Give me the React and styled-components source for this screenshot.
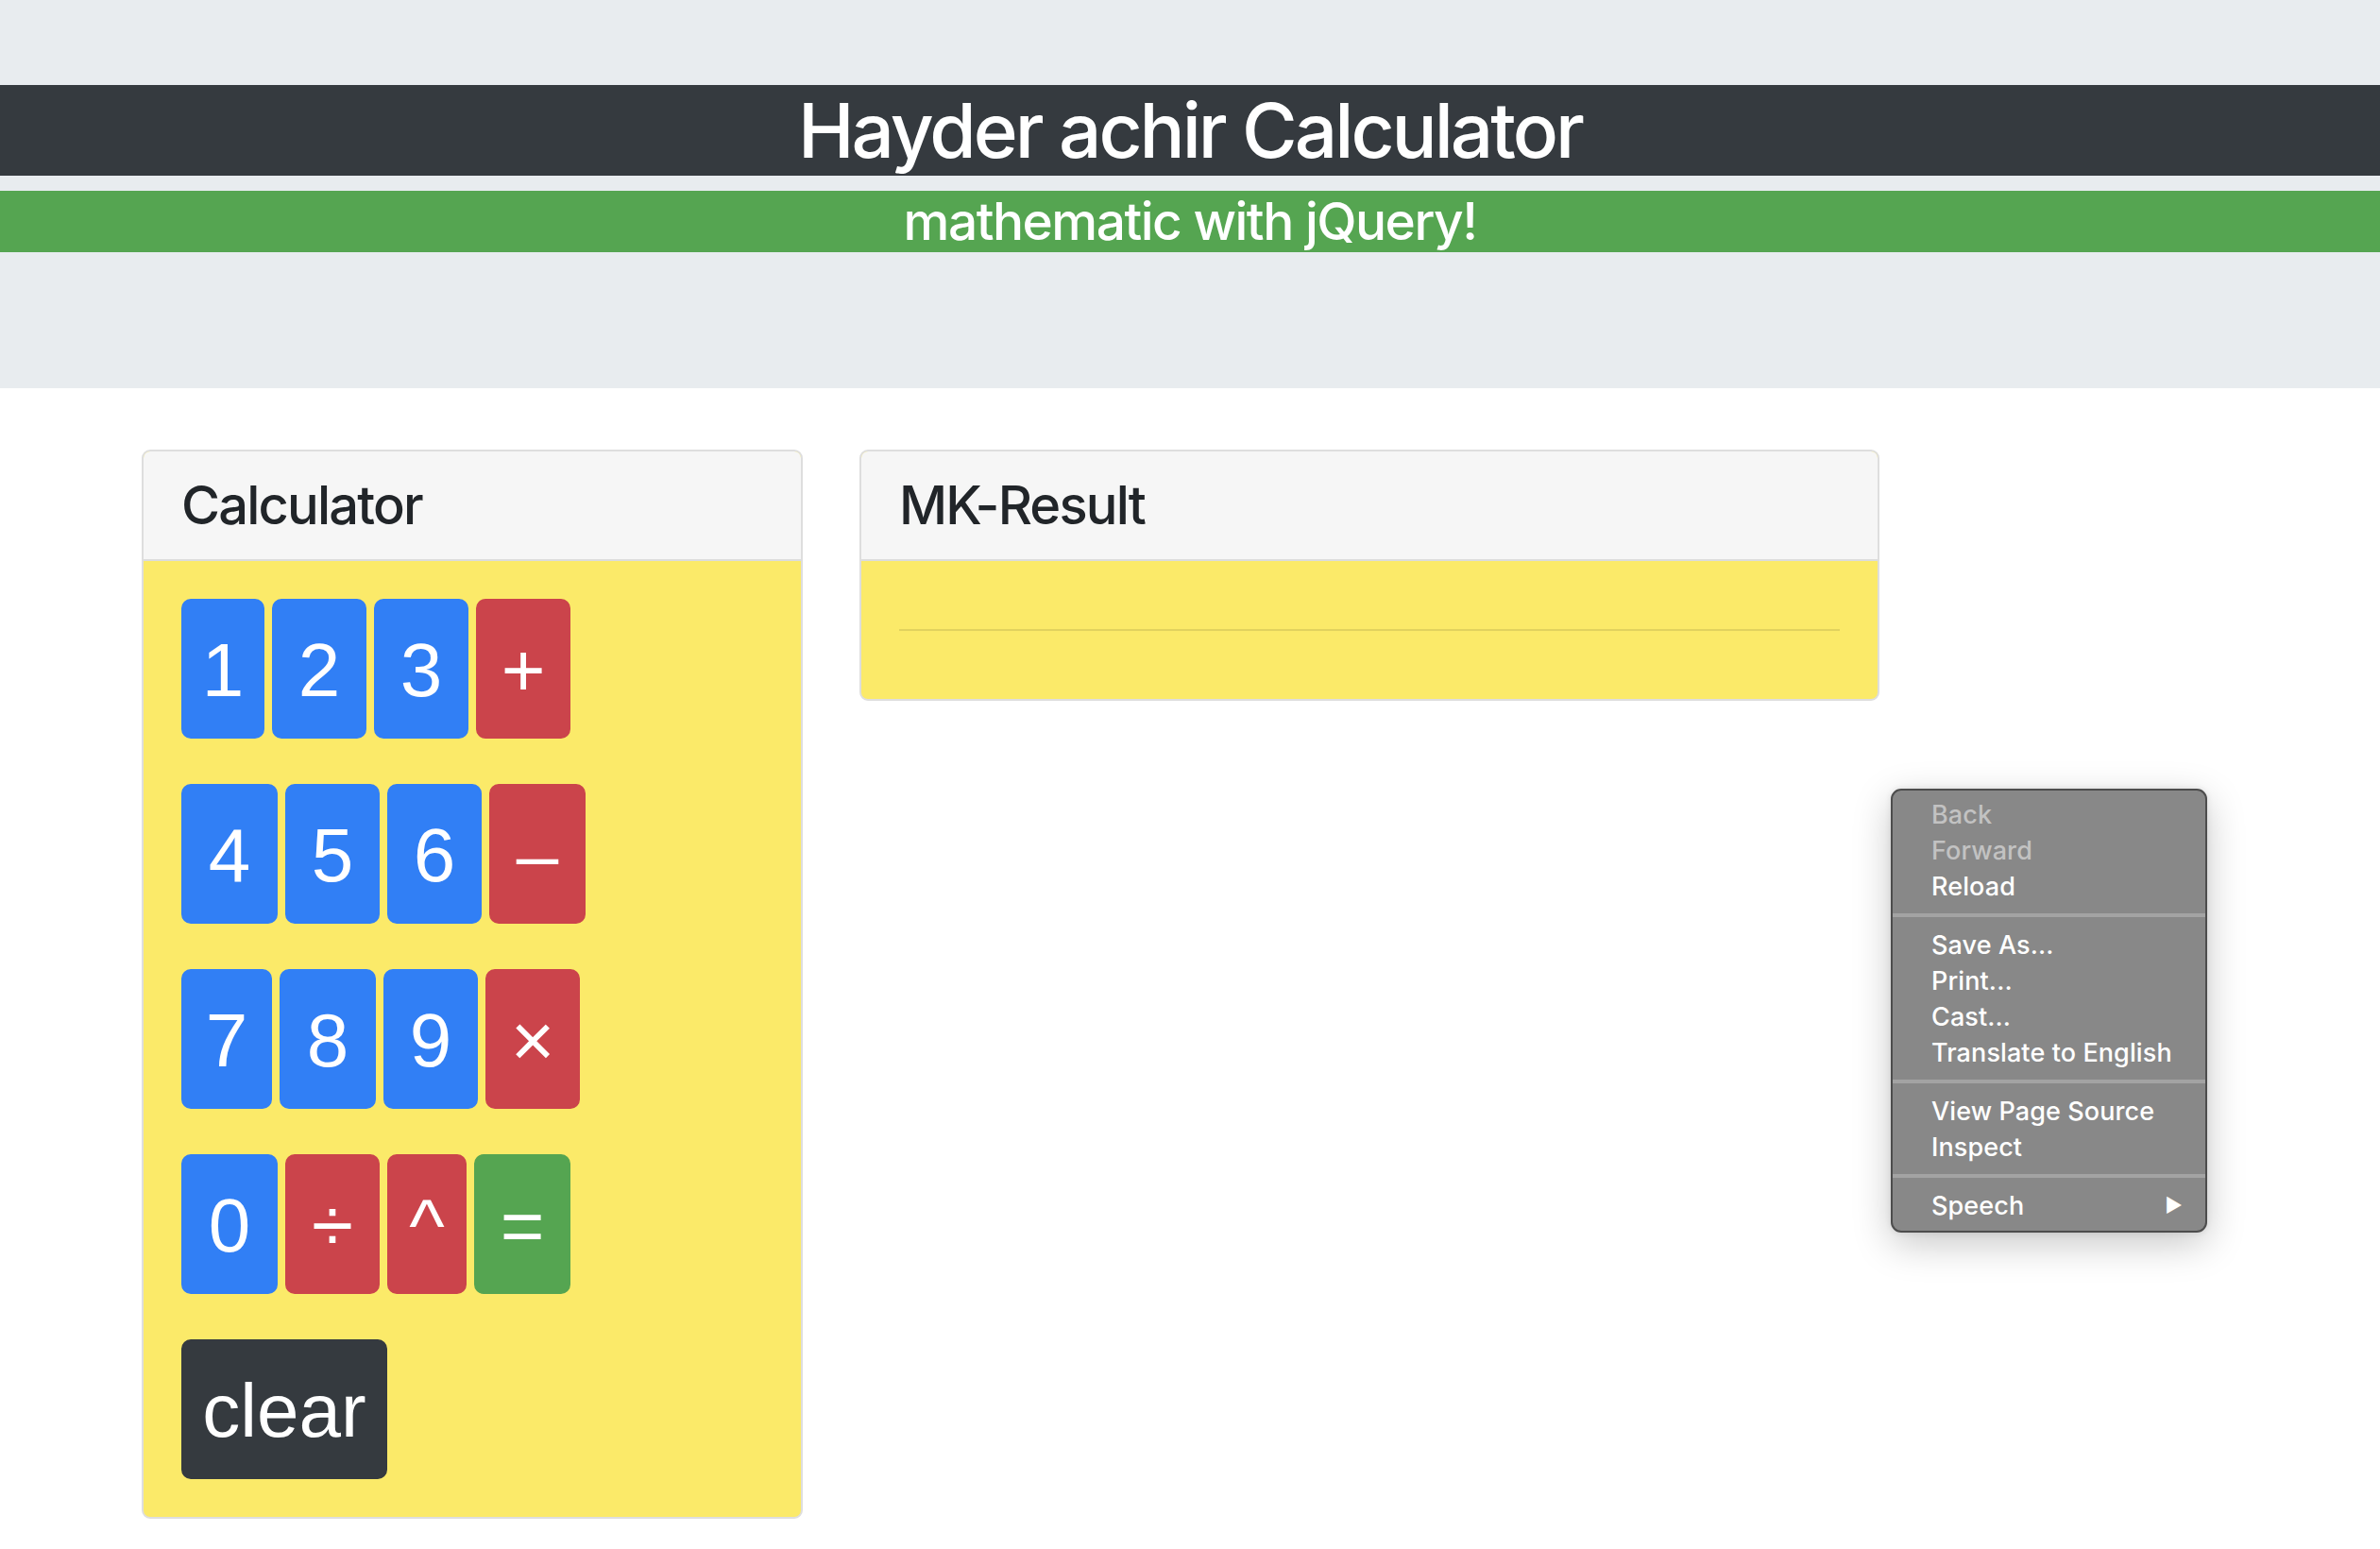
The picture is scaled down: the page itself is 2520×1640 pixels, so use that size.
import React from "react";
import styled, { createGlobalStyle } from "styled-components";

const GlobalStyle = createGlobalStyle`
  body {
    margin: 0;
    background: #fff;
    font-family: Inter, "Helvetica Neue", Arial, sans-serif;
  }
  * { box-sizing: border-box; }
`;

const Page = styled.div`
  position: relative;
  min-height: 1640px;
`;

/* top banner */
const Jumbotron = styled.header`
  background: #e8ecef;
  padding: 90px 0 128px;
  margin-bottom: 65px;
`;

const Title = styled.h1`
  margin: 0 0 16px;
  background: #353a3f;
  color: #fff;
  font-size: 80px;
  line-height: 96px;
  font-weight: 500;
  text-align: center;
  letter-spacing: -3px;
`;

const Subtitle = styled.h3`
  margin: 0 0 16px;
  background: #55a551;
  color: #fff;
  font-size: 55px;
  line-height: 65px;
  font-weight: 500;
  text-align: center;
  letter-spacing: -1.5px;
`;

/* grid */
const Container = styled.main`
  width: 2280px;
  margin: 0 auto;
`;

const Row = styled.div`
  display: flex;
  align-items: flex-start;
`;

const Col = styled.div`
  flex: 0 0 ${(p) => (p.span / 12) * 100}%;
  padding: 0 30px;
`;

/* cards */
const Card = styled.section`
  border: 2px solid #dedede;
  border-radius: 9px;
  overflow: hidden;
  background: #fbea69;
`;

const CardHeader = styled.div`
  background: #f6f6f6;
  padding: 24px 40px;
  border-bottom: 2px solid #dcdcdc;
`;

const CardTitle = styled.h3`
  margin: 0;
  font-size: 56px;
  line-height: 66px;
  font-weight: 500;
  color: #212529;
  letter-spacing: -1.8px;
`;

const CardBody = styled.div`
  padding: 40px;
`;

const Rule = styled.hr`
  margin: 32px 0;
  border: 0;
  border-top: 2px solid rgba(0, 0, 0, 0.1);
`;

/* keypad */
const KeyPad = styled.div`
  display: flex;
  flex-direction: column;
  gap: 48px;
`;

const KeyRow = styled.div`
  display: flex;
  gap: 8px;
`;

const toneColors = {
  num: "#317ff5",
  op: "#cb444b",
  eq: "#55a551",
  dark: "#353a3f",
};

const Key = styled.button`
  width: ${(p) => p.w}px;
  height: 148px;
  padding: 14px 0 10px;
  border: 2px solid ${(p) => toneColors[p.tone]};
  border-radius: 10px;
  background: ${(p) => toneColors[p.tone]};
  color: #fff;
  font-family: "Liberation Sans", Arial, sans-serif;
  font-size: 80px;
  line-height: 120px;
  text-align: center;
  cursor: pointer;
`;

/* right-click menu overlay */
const ContextMenu = styled.div`
  position: absolute;
  left: 2002px;
  top: 835px;
  width: 335px;
  padding: 6px 0 8px;
  background: #888888;
  border: 2px solid #4d4d4d;
  border-radius: 11px;
  box-shadow: 0 12px 40px rgba(0, 0, 0, 0.22), 0 0 6px rgba(0, 0, 0, 0.1);
  font-family: Inter, "Helvetica Neue", Arial, sans-serif;
`;

const MenuItem = styled.div`
  display: flex;
  justify-content: space-between;
  align-items: center;
  padding: 0 24px 0 41px;
  height: 38px;
  font-size: 27px;
  font-weight: 500;
  color: ${(p) => (p.disabled ? "#c2c2c2" : "#fff")};
  letter-spacing: 0.1px;
`;

const MenuArrow = styled.span`
  font-size: 20px;
  color: #fff;
`;

const MenuSeparator = styled.div`
  height: 4px;
  margin: 10px 0;
  background: #a3a3a3;
`;

const rows = [
  [
    ["1", "num", 88],
    ["2", "num", 100],
    ["3", "num", 100],
    ["+", "op", 100],
  ],
  [
    ["4", "num", 102],
    ["5", "num", 100],
    ["6", "num", 100],
    ["–", "op", 102],
  ],
  [
    ["7", "num", 96],
    ["8", "num", 102],
    ["9", "num", 100],
    ["×", "op", 100],
  ],
  [
    ["0", "num", 102],
    ["÷", "op", 100],
    ["^", "op", 84],
    ["=", "eq", 102],
  ],
  [["clear", "dark", 218]],
];

const menuGroups = [
  [
    { label: "Back", disabled: true },
    { label: "Forward", disabled: true },
    { label: "Reload" },
  ],
  [{ label: "Save As..." }, { label: "Print..." }, { label: "Cast..." }, { label: "Translate to English" }],
  [{ label: "View Page Source" }, { label: "Inspect" }],
  [{ label: "Speech", sub: true }],
];

export default function App() {
  return (
    <Page>
      <GlobalStyle />
      <Jumbotron>
        <Title>Hayder achir Calculator</Title>
        <Subtitle>mathematic with jQuery!</Subtitle>
      </Jumbotron>

      <Container>
        <Row>
          <Col span={4}>
            <Card>
              <CardHeader>
                <CardTitle>Calculator</CardTitle>
              </CardHeader>
              <CardBody>
                <KeyPad>
                  {rows.map((row, i) => (
                    <KeyRow key={i}>
                      {row.map(([label, tone, w]) => (
                        <Key key={label} tone={tone} w={w}>
                          {label}
                        </Key>
                      ))}
                    </KeyRow>
                  ))}
                </KeyPad>
              </CardBody>
            </Card>
          </Col>
          <Col span={6}>
            <Card>
              <CardHeader>
                <CardTitle>MK-Result</CardTitle>
              </CardHeader>
              <CardBody>
                <Rule />
              </CardBody>
            </Card>
          </Col>
        </Row>
      </Container>

      <ContextMenu>
        {menuGroups.map((group, gi) => (
          <React.Fragment key={gi}>
            {gi > 0 && <MenuSeparator />}
            {group.map((item) => (
              <MenuItem key={item.label} disabled={item.disabled}>
                {item.label}
                {item.sub && <MenuArrow>▶</MenuArrow>}
              </MenuItem>
            ))}
          </React.Fragment>
        ))}
      </ContextMenu>
    </Page>
  );
}
